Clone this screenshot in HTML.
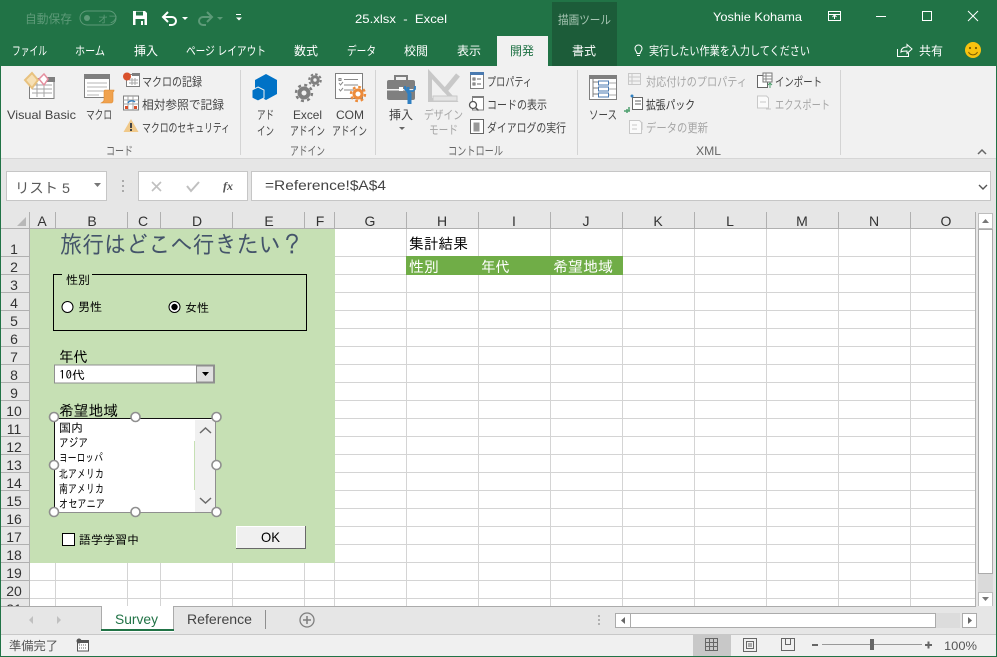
<!DOCTYPE html>
<html lang="ja"><head><meta charset="utf-8"><title>25.xlsx - Excel</title>
<style>
html,body{margin:0;padding:0;width:997px;height:657px;overflow:hidden;background:#fff}
svg{display:block;position:absolute;left:0;top:0}
text{font-family:"Liberation Sans","Noto Sans CJK JP",sans-serif;font-size:12px;fill:#444;white-space:pre}
.w{fill:#fff}
.tab{font-size:12px;fill:#fff}
.r{fill:#444}
.d{fill:#a6a6a6}
.g{fill:#666}
.h{font-family:"Liberation Sans","IPAGothic",sans-serif;font-size:14px;fill:#333;text-anchor:middle}
.m{font-family:"IPAGothic","Liberation Sans",sans-serif;font-size:15px;fill:#000}
.s{font-family:"IPAGothic","Liberation Sans",sans-serif;font-size:12px;fill:#000}
</style></head><body>
<svg width="997" height="657" viewBox="0 0 997 657" xmlns="http://www.w3.org/2000/svg">
<!-- frame and title -->
<rect width="997" height="657" fill="#217346"/>
<rect x="1" y="66" width="995" height="590" fill="#f1f1f1"/>
<rect x="552" y="2" width="65" height="64" fill="#1c5c39"/>
<rect x="497" y="36" width="51" height="30" fill="#f1f1f1"/>

<text x="25" y="23" style="fill:#5d9a78" lengthAdjust="spacingAndGlyphs" textLength="47">自動保存</text>
<rect x="80" y="11" width="36" height="14" rx="7" fill="none" stroke="#5d9a78"/>
<circle cx="87" cy="18" r="3" fill="#5d9a78"/>
<text x="98" y="23" style="fill:#5d9a78;font-size:10px">オフ</text>
<!-- save -->
<path d="M133 11h12l2 2v12h-14z" fill="#fff"/><rect x="136" y="11.500" width="7" height="4" fill="#217346"/><rect x="135.500" y="19" width="9" height="6" fill="#217346"/><rect x="141" y="21" width="2" height="4" fill="#fff"/>
<!-- undo/redo -->
<path d="M164 17h8a4 4 0 0 1 0 8h-3M168 12l-5 5 5 5" fill="none" stroke="#fff" stroke-width="2"/>
<path d="M182 17l3 3 3-3z" fill="#fff"/>
<path d="M211 17h-8a4 4 0 0 0 0 8h3M207 12l5 5-5 5" fill="none" stroke="#5d9a78" stroke-width="2"/>
<path d="M217 17l3 3 3-3z" fill="#5d9a78"/>
<rect x="236" y="14" width="5" height="1" fill="#fff"/><path d="M236 17.500h6l-3 3z" fill="#fff"/>

<text x="355" y="23" class="w" style="font-size:12px" lengthAdjust="spacingAndGlyphs" textLength="92">25.xlsx  -  Excel</text>
<text x="558" y="24" style="fill:#a9c7b5" lengthAdjust="spacingAndGlyphs" textLength="53">描画ツール</text>
<text x="713" y="21" class="w" lengthAdjust="spacingAndGlyphs" textLength="89">Yoshie Kohama</text>
<!-- window buttons -->
<rect x="828.500" y="11.500" width="12" height="9" fill="none" stroke="#fff"/><path d="M828 14.500h13M834.500 19v-3M832.500 17l2-2 2 2" stroke="#fff" fill="none"/>
<rect x="876" y="16" width="10" height="1" fill="#fff"/>
<rect x="922.500" y="11.500" width="9" height="9" fill="none" stroke="#fff"/>
<path d="M968 11l10 10M978 11l-10 10" stroke="#fff" fill="none"/>

<!-- tabs -->
<text x="12" y="55" class="tab" lengthAdjust="spacingAndGlyphs" textLength="35">ファイル</text>
<text x="75" y="55" class="tab" lengthAdjust="spacingAndGlyphs" textLength="30">ホーム</text>
<text x="134" y="55" class="tab" lengthAdjust="spacingAndGlyphs" textLength="24">挿入</text>
<text x="186" y="55" class="tab" lengthAdjust="spacingAndGlyphs" textLength="80">ページ レイアウト</text>
<text x="294" y="55" class="tab" lengthAdjust="spacingAndGlyphs" textLength="24">数式</text>
<text x="347" y="55" class="tab" lengthAdjust="spacingAndGlyphs" textLength="29">データ</text>
<text x="404" y="55" class="tab" lengthAdjust="spacingAndGlyphs" textLength="24">校閲</text>
<text x="457" y="55" class="tab" lengthAdjust="spacingAndGlyphs" textLength="24">表示</text>
<text x="510" y="55" style="fill:#217346" lengthAdjust="spacingAndGlyphs" textLength="24">開発</text>
<text x="572" y="55" class="tab" lengthAdjust="spacingAndGlyphs" textLength="24">書式</text>
<path d="M637 55.500h3M637 53.500c0-2-2-2.500-2-5a3.500 3.500 0 0 1 7 0c0 2.500-2 3-2 5z" fill="none" stroke="#fff"/>
<text x="649" y="55" class="w" lengthAdjust="spacingAndGlyphs" textLength="161">実行したい作業を入力してください</text>
<path d="M897.500 49v7.500h11V53M901 52c0-4 3-5 6-5v-2.500l5 4.500-5 4.500V51c-3 0-5 0-6 1z" fill="none" stroke="#fff"/>
<text x="919" y="55" class="w" lengthAdjust="spacingAndGlyphs" textLength="24">共有</text>
<circle cx="973" cy="50" r="8" fill="#f8c20f"/><circle cx="970" cy="48" r="1.100" fill="#7a5b00"/><circle cx="976" cy="48" r="1.100" fill="#7a5b00"/><path d="M968.500 52a5 5 0 0 0 9 0" fill="none" stroke="#7a5b00"/>

<!-- ribbon separators -->
<g fill="#d4d4d4"><rect x="240" y="70" width="1" height="85"/><rect x="375" y="70" width="1" height="85"/><rect x="577" y="70" width="1" height="85"/><rect x="840" y="70" width="1" height="85"/></g>
<rect x="1" y="158" width="995" height="1" fill="#d6d6d6"/>

<!-- Visual Basic icon -->
<g>
<rect x="29.500" y="78.500" width="24.500" height="20" fill="#fff" stroke="#7f7f7f"/>
<rect x="44" y="77" width="11" height="5" fill="#7f7f7f"/>
<path d="M32 85h20M32 89h20M32 93h20M37 83v14M44 83v14" stroke="#a6a6a6" fill="none"/>
<path d="M32 73l6 7-6 8-7-8z" fill="#f6e0b5" stroke="#e8c27f" stroke-width="2"/>
<path d="M44 74l4 5-4 6-5-6z" fill="#fff" stroke="#e58f9f" stroke-width="1.500"/>
</g>
<text x="7" y="119" lengthAdjust="spacingAndGlyphs" textLength="69">Visual Basic</text>
<!-- macro icon -->
<rect x="84.500" y="75.500" width="25" height="22" fill="#fff" stroke="#7f7f7f"/><rect x="84" y="74" width="26" height="5" fill="#7f7f7f"/>
<path d="M87 83h20M87 87h20M87 91h20M87 95h12" stroke="#b5b5b5" fill="none"/>
<path d="M105 90h9v1l-1 1v9c0 2-2 2-2 2h-10c1-1 3-1 3-3v-8c0-2 1-2 1-2z" fill="#f0a24e" stroke="#e08a30" stroke-width=".6"/>
<text x="86" y="119" lengthAdjust="spacingAndGlyphs" textLength="26">マクロ</text>

<!-- small macro icons -->
<rect x="126.500" y="74.500" width="13" height="12" fill="#fff" stroke="#7f7f7f"/><rect x="132" y="73" width="8" height="3" fill="#7f7f7f"/><path d="M129 80h9M129 83h9M132 78v7M135 78v7" stroke="#a6a6a6" fill="none"/>
<circle cx="127" cy="76.500" r="4" fill="#d9512c"/>
<text x="142" y="86" lengthAdjust="spacingAndGlyphs" textLength="60">マクロの記録</text>
<rect x="123.500" y="96" width="15" height="14" fill="#fff" stroke="#7f7f7f"/>
<path d="M123.500 100h15M123.500 104h15M128 96v14M133 96v14" stroke="#a6a6a6" fill="none"/>
<path d="M128 103a4 3 0 0 1 7-1" stroke="#2f7fc1" stroke-width="1.400" fill="none"/><rect x="125" y="106" width="3" height="3" fill="#d9512c"/><rect x="134" y="106" width="3" height="3" fill="#d9512c"/>
<text x="142" y="109" lengthAdjust="spacingAndGlyphs" textLength="82">相対参照で記録</text>
<path d="M131 119l7.500 13h-15z" fill="#f0c98a"/><rect x="130" y="123" width="2" height="5" fill="#444"/><rect x="130" y="129" width="2" height="2" fill="#444"/>
<text x="142" y="132" lengthAdjust="spacingAndGlyphs" textLength="88">マクロのセキュリティ</text>
<text x="106" y="155" class="g" lengthAdjust="spacingAndGlyphs" textLength="27">コード</text>

<!-- add-in -->
<path d="M266 74l11 6v14l-11 6-11-6V80z" fill="#0072c6"/>
<path d="M258 87l6 3v8l-6 3-6-3v-8z" fill="#0072c6" stroke="#f1f1f1"/>
<text x="257" y="119" lengthAdjust="spacingAndGlyphs" textLength="17">アド</text><text x="257" y="135" lengthAdjust="spacingAndGlyphs" textLength="17">イン</text>
<text x="293" y="119" lengthAdjust="spacingAndGlyphs" textLength="29">Excel</text><text x="290" y="135" lengthAdjust="spacingAndGlyphs" textLength="35">アドイン</text>
<g fill="none" stroke="#7f7f7f">
<circle cx="304" cy="93" r="4.500" stroke-width="4"/><circle cx="304" cy="93" r="8" stroke-width="2.400" stroke-dasharray="3 3.280"/>
<circle cx="315" cy="80" r="3.200" stroke-width="3"/><circle cx="315" cy="80" r="5.800" stroke-width="2" stroke-dasharray="2.500 2.050"/>
</g>
<rect x="335.500" y="73.500" width="27" height="25" fill="#fff" stroke="#7f7f7f"/>
<path d="M339 78.500h2v2h-2zM344 79.500h14M339 83l1.500 2 2.500-3M344 85h14M339 89l1.500 2 2.500-3M344 90h10" fill="none" stroke="#8a8a8a"/>
<circle cx="358" cy="94" r="4" fill="none" stroke="#ed8b3a" stroke-width="3"/><circle cx="358" cy="94" r="7" fill="none" stroke="#ed8b3a" stroke-width="2.400" stroke-dasharray="2.700 2.800"/>
<text x="336" y="119" lengthAdjust="spacingAndGlyphs" textLength="28">COM</text><text x="332" y="135" lengthAdjust="spacingAndGlyphs" textLength="35">アドイン</text>
<text x="290" y="155" class="g" lengthAdjust="spacingAndGlyphs" textLength="35">アドイン</text>

<!-- controls -->
<rect x="387" y="80" width="28" height="20" rx="2" fill="#7f7f7f"/><path d="M395 80v-4h12v4" fill="none" stroke="#7f7f7f" stroke-width="2"/><rect x="387" y="89" width="28" height="1.500" fill="#f1f1f1"/><rect x="399" y="87" width="4" height="4" fill="#fff"/>
<path d="M408 87v5l2 2v10" stroke="#2f7fc1" stroke-width="3" fill="none"/><path d="M405 86v3l2 2h6l2-2v-3" stroke="#2f7fc1" stroke-width="1.800" fill="none"/><path d="M409 92v12" stroke="#2f7fc1" stroke-width="3"/>
<text x="389" y="119" lengthAdjust="spacingAndGlyphs" textLength="24">挿入</text><path d="M399 127h6l-3 3z" fill="#666"/>
<path d="M430 74v26h24z" fill="none" stroke="#c8c8c8" stroke-width="4"/>
<path d="M444 92l14-17" stroke="#c8c8c8" stroke-width="5"/><rect x="433" y="96" width="24" height="5" fill="#e4e4e4" stroke="#c8c8c8"/>
<text x="424" y="119" class="d" lengthAdjust="spacingAndGlyphs" textLength="39">デザイン</text><text x="429" y="134" class="d" lengthAdjust="spacingAndGlyphs" textLength="29">モード</text>
<rect x="470.500" y="73.500" width="13" height="15" fill="#fff" stroke="#7f7f7f"/><rect x="470" y="72" width="14" height="3" fill="#4a7ab0"/><path d="M473 78h2v2h-2zM477 79h4M473 83h2v2h-2zM477 84h4" fill="none" stroke="#666"/>
<text x="487" y="86" lengthAdjust="spacingAndGlyphs" textLength="45">プロパティ</text>
<rect x="472.500" y="97" width="11" height="13" fill="#fff" stroke="#7f7f7f"/><rect x="472" y="96" width="12" height="2" fill="#7f7f7f"/><circle cx="473" cy="105" r="3.500" fill="#fff" stroke="#555" stroke-width="1.300"/><path d="M475.500 107.500l3 3" stroke="#555" stroke-width="1.500"/>
<text x="487" y="109" lengthAdjust="spacingAndGlyphs" textLength="60">コードの表示</text>
<rect x="470.500" y="119.500" width="13" height="14" fill="#fff" stroke="#666"/><rect x="473.500" y="122.500" width="6" height="9" fill="#999"/>
<text x="487" y="132" lengthAdjust="spacingAndGlyphs" textLength="79">ダイアログの実行</text>
<text x="448" y="155" class="g" lengthAdjust="spacingAndGlyphs" textLength="55">コントロール</text>

<!-- XML -->
<rect x="589.500" y="75.500" width="27" height="24" fill="#fff" stroke="#7f7f7f"/><rect x="589" y="75" width="28" height="4" fill="#7f7f7f"/>
<path d="M593 79v18M593 82h5M593 88h5M593 94h5" stroke="#7f7f7f" fill="none"/><rect x="598.500" y="81" width="10" height="4" fill="#fff" stroke="#4a7ab0"/><rect x="598.500" y="87" width="10" height="4" fill="#fff" stroke="#4a7ab0"/><rect x="598.500" y="93" width="10" height="4" fill="#fff" stroke="#4a7ab0"/><path d="M609 83h7M609 89h7M609 95h7" stroke="#aaa" fill="none"/>
<text x="589" y="119" lengthAdjust="spacingAndGlyphs" textLength="28">ソース</text>
<rect x="628.500" y="73.500" width="12" height="11" fill="none" stroke="#c8c8c8"/><path d="M632 73v11M628 77h12M628 81h12" stroke="#c8c8c8" fill="none"/>
<text x="646" y="86" class="d" lengthAdjust="spacingAndGlyphs" textLength="101">対応付けのプロパティ</text>
<rect x="632.500" y="97.500" width="10" height="12" fill="#fff" stroke="#666"/><path d="M635 101h6M635 104h6" stroke="#666" fill="none"/><circle cx="632" cy="96" r="1.500" fill="#2f7fc1"/><path d="M627 109v4M629 107v4M630 111h-6" stroke="#4fa06f" stroke-width="1.500" fill="none"/>
<text x="646" y="109" class="r" style="fill:#333" lengthAdjust="spacingAndGlyphs" textLength="49">拡張パック</text>
<path d="M629.500 120.500h10l2 2v11h-12z" fill="#fafafa" stroke="#c8c8c8"/><path d="M632 125h5M632 129h5M642 122v8" stroke="#c8c8c8" fill="none"/>
<text x="646" y="132" class="d" lengthAdjust="spacingAndGlyphs" textLength="62">データの更新</text>
<rect x="757.500" y="75.500" width="10" height="12" fill="#fff" stroke="#666"/><rect x="763" y="73" width="9" height="9" fill="#fff" stroke="#777"/><path d="M763 76h9M763 79h9M766 73v9" stroke="#888"/><path d="M770 88v-5M768 85l2-2 2 2" stroke="#4fa06f" fill="none"/>
<text x="775" y="86" lengthAdjust="spacingAndGlyphs" textLength="47">インポート</text>
<path d="M757.500 96h9l2 2v10h-11z" fill="#fafafa" stroke="#c8c8c8"/><path d="M760 102h6M766 109h5" stroke="#c8c8c8" fill="none"/>
<text x="775" y="109" class="d" lengthAdjust="spacingAndGlyphs" textLength="55">エクスポート</text>
<text x="696" y="155" class="g" lengthAdjust="spacingAndGlyphs" textLength="25">XML</text>
<path d="M978 154l4-4 4 4" fill="none" stroke="#666" stroke-width="1.500"/>

<!-- formula band -->
<rect x="1" y="159" width="995" height="53" fill="#e6e6e6"/>
<rect x="6.500" y="171.500" width="100" height="29" fill="#fff" stroke="#c6c6c6"/>
<text x="15" y="193" style="fill:#5a5a5a;font-size:14px" lengthAdjust="spacingAndGlyphs" textLength="55">リスト 5</text>
<path d="M94 183h7l-3.500 4z" fill="#777"/>
<g fill="#aaa"><rect x="122" y="180" width="2" height="2"/><rect x="122" y="185" width="2" height="2"/><rect x="122" y="190" width="2" height="2"/></g>
<rect x="138.500" y="171.500" width="109" height="29" fill="#fff" stroke="#c6c6c6"/>
<path d="M152 182l9 9M161 182l-9 9" stroke="#c0c0c0" stroke-width="1.600" fill="none"/>
<path d="M187 186l4 5 8-9" stroke="#c0c0c0" stroke-width="2" fill="none"/>
<text x="223" y="190" style="font-family:'Liberation Serif',serif;font-style:italic;font-weight:bold;font-size:12px;fill:#555">fx</text>
<rect x="251.500" y="171.500" width="739" height="29" fill="#fff" stroke="#c6c6c6"/>
<text x="265" y="190" style="fill:#444;font-size:14px" lengthAdjust="spacingAndGlyphs" textLength="121">=Reference!$A$4</text>
<path d="M979 185l4 4 4-4" stroke="#555" stroke-width="1.400" fill="none"/>

<!-- headers -->
<rect x="1" y="212" width="995" height="394" fill="#e6e6e6"/>
<rect x="30" y="229" width="945" height="377" fill="#fff"/>
<path d="M17 226h9v-9z" fill="#b8b8b8"/>
<g stroke="#d4d4d4" fill="none">
<path d="M55.500 229v377M127.500 229v377M160.500 229v377M232.500 229v377M304.500 229v377M334.500 229v377M406.500 229v377M478.500 229v377M550.500 229v377M622.500 229v377M694.500 229v377M766.500 229v377M838.500 229v377M910.500 229v377"/>
<path d="M30 256.500h945M30 274.500h945M30 292.500h945M30 310.500h945M30 328.500h945M30 346.500h945M30 364.500h945M30 382.500h945M30 400.500h945M30 418.500h945M30 436.500h945M30 454.500h945M30 472.500h945M30 490.500h945M30 508.500h945M30 526.500h945M30 544.500h945M30 562.500h945M30 580.500h945M30 598.500h945"/>
</g>
<g stroke="#b0b0b0" fill="none">
<path d="M29.500 212v17M55.500 212v17M127.500 212v17M160.500 212v17M232.500 212v17M304.500 212v17M334.500 212v17M406.500 212v17M478.500 212v17M550.500 212v17M622.500 212v17M694.500 212v17M766.500 212v17M838.500 212v17M910.500 212v17M975.500 212v394"/>
<path d="M1 228.500h974M29.500 229v377"/>
<path d="M1 256.500h28M1 274.500h28M1 292.500h28M1 310.500h28M1 328.500h28M1 346.500h28M1 364.500h28M1 382.500h28M1 400.500h28M1 418.500h28M1 436.500h28M1 454.500h28M1 472.500h28M1 490.500h28M1 508.500h28M1 526.500h28M1 544.500h28M1 562.500h28M1 580.500h28M1 598.500h28"/>
</g>
<g class="hh">
<text class="h" x="42" y="226">A</text><text class="h" x="92" y="226">B</text><text class="h" x="143" y="226">C</text><text class="h" x="197" y="226">D</text><text class="h" x="269" y="226">E</text><text class="h" x="320" y="226">F</text><text class="h" x="370" y="226">G</text><text class="h" x="442" y="226">H</text><text class="h" x="514" y="226">I</text><text class="h" x="586" y="226">J</text><text class="h" x="658" y="226">K</text><text class="h" x="730" y="226">L</text><text class="h" x="802" y="226">M</text><text class="h" x="874" y="226">N</text><text class="h" x="946" y="226">O</text>
<text class="h" x="14" y="254">1</text><text class="h" x="14" y="272">2</text><text class="h" x="14" y="290">3</text><text class="h" x="14" y="308">4</text><text class="h" x="14" y="326">5</text><text class="h" x="14" y="344">6</text><text class="h" x="14" y="362">7</text><text class="h" x="14" y="380">8</text><text class="h" x="14" y="398">9</text><text class="h" x="14" y="416">10</text><text class="h" x="14" y="434">11</text><text class="h" x="14" y="452">12</text><text class="h" x="14" y="470">13</text><text class="h" x="14" y="488">14</text><text class="h" x="14" y="506">15</text><text class="h" x="14" y="524">16</text><text class="h" x="14" y="542">17</text><text class="h" x="14" y="560">18</text><text class="h" x="14" y="578">19</text><text class="h" x="14" y="596">20</text><text class="h" x="14" y="614">21</text>
</g>

<!-- cells H:J -->
<text class="m" x="409" y="249" lengthAdjust="spacingAndGlyphs" textLength="59">集計結果</text>
<rect x="406" y="256" width="217" height="19" fill="#70ad47"/>
<text class="m" x="409" y="272" style="fill:#fff" lengthAdjust="spacingAndGlyphs" textLength="30">性別</text>
<text class="m" x="481" y="272" style="fill:#fff" lengthAdjust="spacingAndGlyphs" textLength="29">年代</text>
<text class="m" x="553" y="272" style="fill:#fff" lengthAdjust="spacingAndGlyphs" textLength="60">希望地域</text>

<!-- green form -->
<rect x="30" y="229" width="305" height="334" fill="#c6e0b4"/>
<text x="60" y="253" style="font-family:'IPAGothic','Noto Sans CJK JP',sans-serif;font-size:24px;fill:#44546a" lengthAdjust="spacingAndGlyphs" textLength="243">旅行はどこへ行きたい？</text>
<rect x="53.500" y="274.500" width="253" height="56" fill="none" stroke="#000"/>
<rect x="62" y="272" width="30" height="6" fill="#c6e0b4"/>
<text class="s" x="66" y="284" lengthAdjust="spacingAndGlyphs" textLength="24">性別</text>
<circle cx="67.500" cy="307" r="5.500" fill="#fff" stroke="#000"/>
<text class="s" x="78" y="311" lengthAdjust="spacingAndGlyphs" textLength="24">男性</text>
<circle cx="174.500" cy="307" r="5.500" fill="#fff" stroke="#000"/><circle cx="174.500" cy="307" r="3.200" fill="#000"/>
<text class="s" x="185" y="312" lengthAdjust="spacingAndGlyphs" textLength="24">女性</text>
<text class="m" x="59" y="362" lengthAdjust="spacingAndGlyphs" textLength="29">年代</text>
<rect x="54.500" y="365" width="160" height="18" fill="#fff" stroke="#8f8f8f"/>
<text class="s" x="59" y="379" lengthAdjust="spacingAndGlyphs" textLength="26">10代</text>
<rect x="196.500" y="366" width="17" height="16" fill="#e1e1e1" stroke="#8f8f8f"/>
<path d="M202 372h7l-3.500 4z" fill="#000"/>
<text class="m" x="59" y="416" lengthAdjust="spacingAndGlyphs" textLength="59">希望地域</text>
<!-- listbox -->
<rect x="54.500" y="418.500" width="161" height="94" fill="#fff" stroke="#8f8f8f"/>
<path d="M54.500 513v-94.500h161" fill="none" stroke="#111"/>
<rect x="195" y="420" width="20" height="92" fill="#f0f0f0"/>
<rect x="194" y="441" width="1" height="49" fill="#c6e0b4"/>
<path d="M200 433l5.500-5 5.500 5M200 498l5.500 5 5.500-5" fill="none" stroke="#6a6a6a" stroke-width="1.500"/>
<text class="s" x="59" y="432" lengthAdjust="spacingAndGlyphs" textLength="24">国内</text>
<text class="s" x="59" y="447" lengthAdjust="spacingAndGlyphs" textLength="29">アジア</text>
<text class="s" x="59" y="462" lengthAdjust="spacingAndGlyphs" textLength="44">ヨーロッパ</text>
<text class="s" x="59" y="478" lengthAdjust="spacingAndGlyphs" textLength="45">北アメリカ</text>
<text class="s" x="59" y="493" lengthAdjust="spacingAndGlyphs" textLength="45">南アメリカ</text>
<text class="s" x="59" y="508" lengthAdjust="spacingAndGlyphs" textLength="46">オセアニア</text>
<g fill="#fff" stroke="#8f8f8f" stroke-width="1.600">
<circle cx="54" cy="417" r="4.500"/><circle cx="135.500" cy="417" r="4.500"/><circle cx="216.500" cy="417" r="4.500"/>
<circle cx="54" cy="465" r="4.500"/><circle cx="216.500" cy="465" r="4.500"/>
<circle cx="54" cy="512" r="4.500"/><circle cx="135.500" cy="512" r="4.500"/><circle cx="216.500" cy="512" r="4.500"/>
</g>
<rect x="62.500" y="533.500" width="12" height="12" fill="#fff" stroke="#000"/>
<text class="s" x="79" y="544" lengthAdjust="spacingAndGlyphs" textLength="60">語学学習中</text>
<rect x="236" y="526" width="70" height="23" fill="#f0f0f0"/>
<path d="M236.500 549v-22.500h69" fill="none" stroke="#fff"/><path d="M236 548.500h69.500V526" fill="none" stroke="#696969"/>
<text x="261" y="542" style="font-size:14px;fill:#000" lengthAdjust="spacingAndGlyphs" textLength="19">OK</text>

<!-- right scrollbar -->
<rect x="976" y="212" width="20" height="394" fill="#e6e6e6"/>
<rect x="978" y="574" width="15" height="18" fill="#dadada"/>
<rect x="978.500" y="213.500" width="14" height="15" fill="#fff" stroke="#bdbdbd"/><path d="M982 223l3.500-4 3.500 4z" fill="#777"/>
<rect x="978.500" y="229.500" width="14" height="344" fill="#fff" stroke="#ababab"/>
<rect x="978.500" y="592.500" width="14" height="14" fill="#fff" stroke="#bdbdbd"/><path d="M982 597h7l-3.500 4z" fill="#777"/>

<!-- sheet tabs -->
<rect x="1" y="606" width="995" height="28" fill="#e6e6e6"/>
<rect x="1" y="606" width="975" height="1" fill="#ababab"/>
<path d="M33 619l-4 4 4 4zM57 619l4 4-4 4z" fill="#c0c0c0" transform="translate(0 -3)"/>
<rect x="101" y="606" width="73" height="26" fill="#fff"/>
<path d="M101.500 606v24M173.500 606v24" stroke="#ababab"/>
<rect x="101" y="629" width="73" height="2" fill="#217346"/>
<text x="115" y="624" style="fill:#217346;font-size:13.500px" lengthAdjust="spacingAndGlyphs" textLength="43">Survey</text>
<text x="187" y="624" style="fill:#444;font-size:13.500px" lengthAdjust="spacingAndGlyphs" textLength="65">Reference</text>
<rect x="265" y="610" width="1" height="19" fill="#8f8f8f"/>
<circle cx="307" cy="620" r="7" fill="none" stroke="#7f7f7f" stroke-width="1.300"/><path d="M303 620h8M307 616v8" stroke="#7f7f7f" stroke-width="1.500"/>
<g fill="#b0b0b0"><rect x="598" y="615" width="2" height="2"/><rect x="598" y="619" width="2" height="2"/><rect x="598" y="623" width="2" height="2"/></g>
<rect x="615.500" y="613.500" width="15" height="14" fill="#fff" stroke="#ababab"/><path d="M625 617l-4 3.500 4 3.500z" fill="#666"/>
<rect x="630.500" y="613.500" width="305" height="14" fill="#fff" stroke="#ababab"/>
<rect x="936" y="613" width="24" height="15" fill="#dcdcdc"/>
<rect x="962.500" y="613.500" width="14" height="14" fill="#fff" stroke="#ababab"/><path d="M968 617l4 3.500-4 3.500z" fill="#666"/>

<!-- status -->
<rect x="1" y="634" width="995" height="1" fill="#c8c8c8"/>
<rect x="1" y="635" width="995" height="21" fill="#f0f0f0"/>
<text x="9" y="650" style="fill:#555" lengthAdjust="spacingAndGlyphs" textLength="49">準備完了</text>
<rect x="77.500" y="642.500" width="11" height="8.500" fill="#fff" stroke="#555"/><rect x="81" y="640" width="8" height="2" fill="#555"/><circle cx="79" cy="641" r="2.500" fill="#555"/><path d="M79 645h8M79 648h8" stroke="#666" stroke-dasharray="1 1"/>
<rect x="693" y="635" width="38" height="21" fill="#c8c8c8"/>
<rect x="705.500" y="638.500" width="12" height="12" fill="none" stroke="#666"/><path d="M709.500 638v13M713.500 638v13M705 642.500h13M705 646.500h13" stroke="#666" fill="none"/>
<rect x="743.500" y="638.500" width="13" height="13" fill="none" stroke="#666"/><rect x="746.500" y="641.500" width="7" height="7" fill="none" stroke="#666"/><path d="M748 644h4M748 646h4" stroke="#666"/>
<path d="M781.500 638.500h13v12h-13zM785.500 638.500v6h5v-6" fill="none" stroke="#666"/>
<rect x="812" y="644" width="6" height="2" fill="#666"/>
<rect x="822" y="644" width="100" height="1" fill="#999"/>
<rect x="870" y="639" width="4" height="11" fill="#666"/>
<path d="M925 645h7M928.500 641.500v7" stroke="#666" stroke-width="2"/>
<text x="944" y="650" style="fill:#555" lengthAdjust="spacingAndGlyphs" textLength="33">100%</text>
</svg>
</body></html>
